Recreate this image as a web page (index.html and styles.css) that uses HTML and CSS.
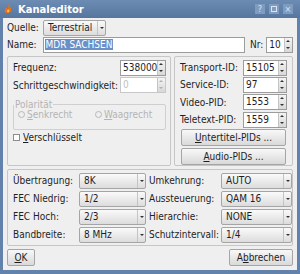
FILE: index.html
```html
<!DOCTYPE html>
<html lang="de">
<head>
  <meta charset="UTF-8" />
  <title>Kanaleditor</title>
  <link rel="stylesheet" href="styles.css">
</head>
<body>
  <div class="window">
    <div class="titlebar">
      <svg class="app-icon" width="8" height="10" viewBox="0 0 8 10">
        <path d="M4 0 C6 3 8 4 7 7 C6 9 2 10 1 8 C0 6 2 5 2 3 C3 4 3 5 4 5 C5 3 4 2 4 0Z" fill="#e8701a"/>
        <path d="M4 5 C5 6 6 7 5 8 C4 9 3 8 3 7Z" fill="#f7c43c"/>
      </svg>
      <span class="title">Kanaleditor</span>
      <div class="title-buttons">
        <span class="tbtn">?</span>
        <span class="tbtn"><span class="max-box"></span></span>
        <span class="tbtn">×</span>
      </div>
    </div>

    <div class="content">
      <div class="row">
        <span class="lbl">Quelle:</span>
        <div class="combo combo-source"><span>Terrestrial</span><span class="arrow"></span></div>
      </div>

      <div class="row">
        <span class="lbl">Name:</span>
        <div class="textbox"><span class="selected">MDR SACHSEN</span></div>
        <span class="lbl nr">Nr:</span>
        <div class="spin spin-nr"><span class="val">10</span><span class="arrows"><i class="up"></i><i class="down"></i></span></div>
      </div>

      <div class="groups">
        <div class="group group-left">
          <div class="frow">
            <span class="lbl">Frequenz:</span>
            <div class="spin spin-left"><span class="val">538000</span><span class="arrows"><i class="up"></i><i class="down"></i></span></div>
          </div>
          <div class="frow">
            <span class="lbl">Schrittgeschwindigkeit:</span>
            <div class="spin spin-left disabled"><span class="val">0</span><span class="arrows"><i class="up"></i><i class="down"></i></span></div>
          </div>
          <fieldset class="polar">
            <legend>Polarität</legend>
            <span class="radio"><i></i><span><u>S</u>enkrecht</span></span>
            <span class="radio"><i></i><span><u>W</u>aagrecht</span></span>
          </fieldset>
          <div class="check"><i></i><span><u>V</u>erschlüsselt</span></div>
        </div>

        <div class="group group-right">
          <div class="frow">
            <span class="lbl">Transport-ID:</span>
            <div class="spin spin-right"><span class="val">15105</span><span class="arrows"><i class="up"></i><i class="down"></i></span></div>
          </div>
          <div class="frow">
            <span class="lbl">Service-ID:</span>
            <div class="spin spin-right"><span class="val">97</span><span class="arrows"><i class="up"></i><i class="down"></i></span></div>
          </div>
          <div class="frow">
            <span class="lbl">Video-PID:</span>
            <div class="spin spin-right"><span class="val">1553</span><span class="arrows"><i class="up"></i><i class="down"></i></span></div>
          </div>
          <div class="frow">
            <span class="lbl">Teletext-PID:</span>
            <div class="spin spin-right"><span class="val">1559</span><span class="arrows"><i class="up"></i><i class="down"></i></span></div>
          </div>
          <div class="button wide"><span><u>U</u>ntertitel-PIDs ...</span></div>
          <div class="button wide"><span><u>A</u>udio-PIDs ...</span></div>
        </div>
      </div>

      <div class="group group-bottom">
        <span class="lbl">Übertragung:</span>
        <div class="combo"><span>8K</span><span class="arrow"></span></div>
        <span class="lbl">Umkehrung:</span>
        <div class="combo"><span>AUTO</span><span class="arrow"></span></div>

        <span class="lbl">FEC Niedrig:</span>
        <div class="combo"><span>1/2</span><span class="arrow"></span></div>
        <span class="lbl">Aussteuerung:</span>
        <div class="combo"><span>QAM 16</span><span class="arrow"></span></div>

        <span class="lbl">FEC Hoch:</span>
        <div class="combo"><span>2/3</span><span class="arrow"></span></div>
        <span class="lbl">Hierarchie:</span>
        <div class="combo"><span>NONE</span><span class="arrow"></span></div>

        <span class="lbl">Bandbreite:</span>
        <div class="combo"><span>8 MHz</span><span class="arrow"></span></div>
        <span class="lbl">Schutzintervall:</span>
        <div class="combo"><span>1/4</span><span class="arrow"></span></div>
      </div>

      <div class="footer">
        <div class="button ok"><span><u>O</u>K</span></div>
        <div class="button cancel"><span>A<u>b</u>brechen</span></div>
      </div>
    </div>
  </div>
</body>
</html>
```

FILE: styles.css
```css
* {
  margin: 0;
  padding: 0;
  box-sizing: border-box;
}

body {
  background-color: #ffffff;
  font-family: 'DejaVu Sans', 'Liberation Sans', sans-serif;
  font-size: 10px;
  font-stretch: semi-condensed;
  color: #1e1e1e;
}

u {
  text-decoration: underline;
}

.window {
  width: 300px;
  height: 274px;
  background-color: #6282ab;
  display: flex;
  flex-direction: column;
}

/* title bar */
.titlebar {
  height: 18px;
  display: flex;
  align-items: center;
  padding: 0 4px;
  background: linear-gradient(#6d8cb3, #56769f);
  color: #ffffff;
}

.app-icon {
  margin-right: 6px;
}

.title {
  font-weight: bold;
  font-size: 10px;
  font-stretch: normal;
  flex: 1;
}

.title-buttons {
  display: flex;
  gap: 4px;
  margin-right: 3px;
}

.tbtn {
  width: 10px;
  height: 10px;
  display: flex;
  align-items: center;
  justify-content: center;
  font-size: 9px;
  color: #dde6f0;
  background-color: #7e9bc0;
}

.max-box {
  width: 6px;
  height: 6px;
  border: 1px solid #dde6f0;
}

/* dialog body */
.content {
  flex: 1;
  margin: 0 3px 4px;
  background-color: #efefef;
  padding: 1px 4px 0;
  display: flex;
  flex-direction: column;
}

.row {
  height: 17px;
  display: flex;
  align-items: center;
  gap: 3px;
}

.lbl {
  white-space: nowrap;
}

.lbl.nr {
  margin-left: 2px;
}

/* combo box */
.combo {
  height: 16px;
  display: flex;
  align-items: center;
  border: 1px solid #a5a5a5;
  border-radius: 2px;
  background: linear-gradient(#fafafa, #dcdcdc);
  padding-left: 4px;
}

.combo span:first-child {
  flex: 1;
}

.combo .arrow {
  width: 8px;
  height: 14px;
  border-left: 1px solid #c4c4c4;
  position: relative;
}

.combo .arrow::after {
  content: "";
  position: absolute;
  left: 2px;
  top: 6px;
  border-left: 2px solid transparent;
  border-right: 2px solid transparent;
  border-top: 2px solid #333333;
}

.combo-source {
  width: 63px;
  margin-left: 1px;
}

/* line edit */
.textbox {
  width: 205px;
  height: 16px;
  border: 1px solid #9c9c9c;
  background-color: #ffffff;
  display: flex;
  align-items: center;
  padding-left: 1px;
  margin-left: 3px;
}

.selected {
  background-color: #6b8fc6;
  color: #ffffff;
  padding: 0 1px;
}

/* spin box */
.spin {
  height: 16px;
  display: flex;
  border: 1px solid #9c9c9c;
  background-color: #ffffff;
}

.spin .val {
  flex: 1;
  padding-left: 2px;
  line-height: 14px;
}

.spin .arrows {
  width: 8px;
  display: flex;
  flex-direction: column;
  background: linear-gradient(#f4f4f4, #d8d8d8);
  border-left: 1px solid #c4c4c4;
}

.spin .arrows i {
  flex: 1;
  position: relative;
}

.spin .arrows i::after {
  content: "";
  position: absolute;
  left: 1px;
  border-left: 2px solid transparent;
  border-right: 2px solid transparent;
}

.spin .arrows .up::after {
  top: 2px;
  border-bottom: 2px solid #333333;
}

.spin .arrows .down::after {
  top: 2px;
  border-top: 2px solid #333333;
}

.spin.disabled {
  border-color: #c8c8c8;
}

.spin.disabled .val {
  color: #c0c0c0;
}

.spin.disabled .arrows i::after {
  border-top-color: #b0b0b0;
  border-bottom-color: #b0b0b0;
}

.spin-nr {
  width: 27px;
}

.spin-left {
  width: 46px;
}

.spin-right {
  width: 44px;
}

/* group boxes */
.groups {
  display: flex;
  gap: 3px;
  margin-top: 3px;
  height: 110px;
}

.group {
  border: 1px solid #c6c6c6;
  border-radius: 2px;
}

.group-left {
  width: 164px;
  padding: 2px 4px 0 5px;
  display: flex;
  flex-direction: column;
}

.group-right {
  flex: 1;
  padding: 2px 5px 0 5px;
  display: flex;
  flex-direction: column;
}

.frow {
  height: 17.5px;
  display: flex;
  align-items: center;
  justify-content: space-between;
}

.polar {
  margin-top: 6px;
  height: 30px;
  border: 1px solid #cfcfcf;
  border-radius: 2px;
  padding: 0 4px;
  color: #b4b4b4;
  display: flex;
  align-items: center;
  gap: 11px;
}

.polar legend {
  padding: 0 1px;
  margin-left: -4px;
  line-height: 9px;
}

.radio {
  display: flex;
  align-items: center;
  gap: 2px;
  width: 66px;
}

.radio i {
  width: 7px;
  height: 7px;
  border: 1px solid #b8b8b8;
  border-radius: 50%;
}

.check {
  margin-top: 2px;
  display: flex;
  align-items: center;
  gap: 3px;
}

.check i {
  width: 7px;
  height: 7px;
  border: 1px solid #8c8c8c;
  background-color: #ffffff;
}

.button {
  height: 17px;
  display: flex;
  align-items: center;
  justify-content: center;
  border: 1px solid #a5a5a5;
  border-radius: 2px;
  background: linear-gradient(#f8f8f8, #d9d9d9);
}

.button.wide {
  margin: 1px 1px 0 1px;
}

.button.wide + .button.wide {
  margin-top: 2px;
}

/* bottom grid */
.group-bottom {
  margin-top: 3px;
  height: 77px;
  display: grid;
  grid-template-columns: 63px 67px 70px 70px;
  column-gap: 3px;
  row-gap: 2px;
  align-content: center;
  align-items: center;
  padding: 0 5px;
}

.group-bottom .combo:nth-child(4n) {
  margin-left: -1px;
}

/* dialog buttons */
.footer {
  display: flex;
  justify-content: space-between;
  margin-top: 3px;
}

.button.ok {
  width: 28px;
}

.button.cancel {
  width: 64px;
}
```
